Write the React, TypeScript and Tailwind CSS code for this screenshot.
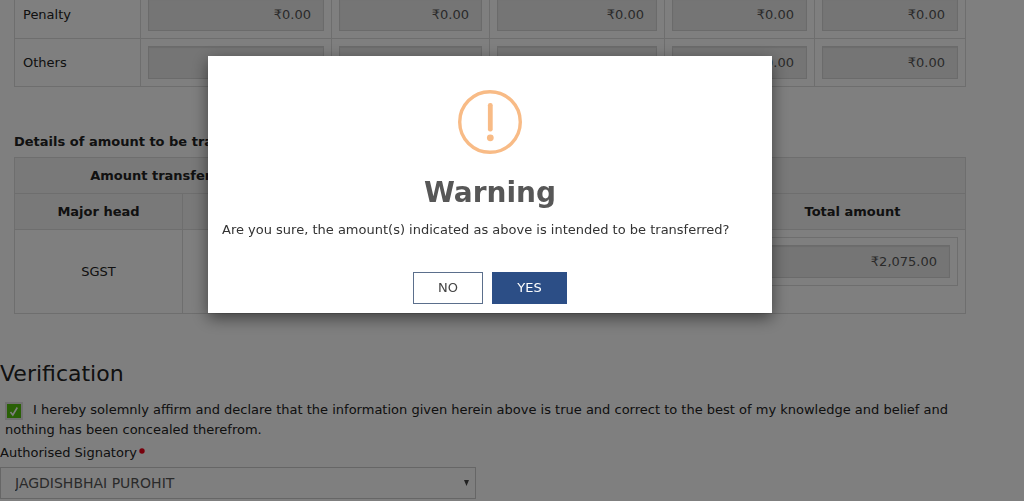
import React, { useState } from "react";

type Row = { label: string; values: string[] };

const rows: Row[] = [
  { label: "Penalty", values: ["₹0.00", "₹0.00", "₹0.00", "₹0.00", "₹0.00"] },
  { label: "Others", values: ["₹0.00", "₹0.00", "₹0.00", "₹0.00", "₹0.00"] },
];

const AmountInput: React.FC<{ label: string; value: string }> = ({ label, value }) => (
  <input
    type="text"
    aria-label={label}
    className="block h-[33px] w-full border border-[#d6d6d6] bg-[#ebebeb] px-3 text-right text-[#555] shadow-[inset_0_1px_1px_rgba(0,0,0,0.08)]"
    value={value}
    readOnly
  />
);

const LedgerTable = () => (
  <table className="-mt-[10px] w-full table-fixed border-collapse">
    <colgroup>
      <col className="w-[126px]" />
      <col className="w-[191px]" />
      <col className="w-[158px]" />
      <col className="w-[175px]" />
      <col className="w-[150px]" />
      <col className="w-[151px]" />
    </colgroup>
    <tbody>
      {rows.map((row) => (
        <tr key={row.label}>
          <th scope="row" className="border border-[#ddd] px-2 py-[7px] text-left font-normal">
            {row.label}
          </th>
          {row.values.map((value, i) => (
            <td key={i} className="border border-[#ddd] p-[7px]">
              <AmountInput label={`${row.label} ${i + 1}`} value={value} />
            </td>
          ))}
        </tr>
      ))}
    </tbody>
  </table>
);

const TransferTable = () => (
  <table className="w-full table-fixed border-collapse text-center">
    <colgroup>
      <col className="w-[168px]" />
      <col className="w-[168px]" />
      <col className="w-[389px]" />
      <col className="w-[226px]" />
    </colgroup>
    <thead className="bg-[#f3f3f3]">
      <tr className="h-9">
        <th colSpan={2} className="border border-[#ddd]">Amount transferred from</th>
        <th colSpan={2} className="border border-[#ddd]">Amount transferred to</th>
      </tr>
      <tr className="h-9">
        <th className="border border-[#ddd]">Major head</th>
        <th className="border border-[#ddd]">Minor head</th>
        <th className="border border-[#ddd]" />
        <th className="border border-[#ddd]">Total amount</th>
      </tr>
    </thead>
    <tbody>
      <tr className="h-[84px]">
        <td className="border border-[#ddd]">SGST</td>
        <td className="border border-[#ddd]" />
        <td className="border border-[#ddd]" />
        <td className="border border-[#ddd] p-[7px] align-top">
          <div className="border border-[#ddd] p-[7px]">
            <AmountInput label="Total amount" value="₹2,075.00" />
          </div>
        </td>
      </tr>
    </tbody>
  </table>
);

const Verification = () => {
  const [agreed, setAgreed] = useState(true);

  return (
    <section className="mt-[46px]">
      <h2 className="text-[22px] leading-7">Verification</h2>
      <div className="mt-3 pl-[5px]">
        <label className="block leading-5">
          <span className="relative mr-[10px] inline-block size-[18px] align-middle">
            <input
              type="checkbox"
              className="block size-[18px] appearance-none border-2 border-[#e2e2e2] bg-white checked:bg-[#52c00c]"
              checked={agreed}
              onChange={(e) => setAgreed(e.target.checked)}
            />
            {agreed && (
              <svg className="pointer-events-none absolute inset-0" viewBox="0 0 18 18" fill="none">
                <path d="M5.5 10 7.8 13 12.3 5.5" stroke="white" strokeWidth="1.6" />
              </svg>
            )}
          </span>
          I hereby solemnly affirm and declare that the information given herein above is true and
          correct to the best of my knowledge and belief and nothing has been concealed therefrom.
        </label>
      </div>
      <label htmlFor="signatory" className="mt-[3px] flex leading-5">
        Authorised Signatory
        <svg className="ml-[2px] mt-[5px] size-[6px]" viewBox="0 0 6 6">
          <circle cx="3" cy="3" r="2.7" fill="#f00018" />
        </svg>
      </label>
      <div className="relative mt-1 w-[476px]">
        <select
          id="signatory"
          className="block h-8 w-full appearance-none border border-[#ccc] bg-white pl-[14px] text-sm text-[#555]"
        >
          <option>JAGDISHBHAI PUROHIT</option>
        </select>
        <svg className="pointer-events-none absolute right-[7px] top-[13px] h-[6px] w-[5px]" viewBox="0 0 5 6">
          <path d="M0 0h5L2.5 6z" fill="#444" />
        </svg>
      </div>
    </section>
  );
};

const WarningDialog = () => (
  <div className="fixed inset-0 flex items-start justify-center bg-black/50 pr-11 pt-14">
    <div
      role="alertdialog"
      aria-modal="true"
      aria-labelledby="warning-title"
      aria-describedby="warning-text"
      className="w-[564px] bg-white px-[14px] pb-[9px] pt-[34px] shadow-[0_5px_15px_rgba(0,0,0,0.5)]"
    >
      <svg className="mx-auto size-16" viewBox="0 0 64 64" fill="none">
        <circle cx="32" cy="32" r="30.3" stroke="#f8bb86" strokeWidth="3.4" />
        <rect x="29.9" y="13" width="4.8" height="28.5" rx="2.2" fill="#f8bb86" />
        <circle cx="32.3" cy="47.8" r="3.4" fill="#f8bb86" />
      </svg>
      <h2 id="warning-title" className="mt-[21px] text-center text-[28px] font-bold leading-9 text-[#575757]">
        Warning
      </h2>
      <p id="warning-text" className="mt-[9px] leading-5 text-[#333]">
        Are you sure, the amount(s) indicated as above is intended to be transferred?
      </p>
      <div className="mt-8 flex justify-center gap-[9px]">
        <button type="button" className="h-8 w-[70px] border border-[#5b6f8c] bg-white text-[#444]">
          NO
        </button>
        <button type="button" className="h-8 w-[75px] bg-[#2c4e86] text-white">
          YES
        </button>
      </div>
    </div>
  </div>
);

const App = () => (
  <div className="h-screen overflow-hidden bg-white font-['DejaVu_Sans',Verdana,sans-serif] text-[13px] text-[#222]">
    <main className="mr-11">
      <div className="mx-[14px]">
        <LedgerTable />
        <h3 className="mb-[5px] mt-[45px] font-bold leading-5">Details of amount to be transferred</h3>
        <TransferTable />
      </div>
      <Verification />
    </main>
    <WarningDialog />
  </div>
);

export default App;
